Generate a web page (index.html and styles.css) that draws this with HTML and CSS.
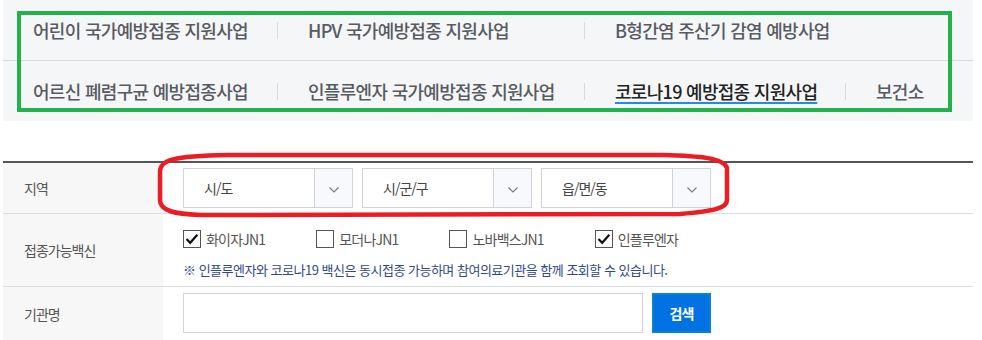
FILE: index.html
```html
<!DOCTYPE html>
<html lang="ko">
<head>
    <meta charset="UTF-8">
    <meta name="viewport" content="width=device-width, initial-scale=1.0">
    <title>예방접종 의료기관 찾기</title>
    <link rel="stylesheet" href="styles.css">
</head>
<body>
    <div class="page">
        <div class="program-nav">
            <ul class="nav-row">
                <li><a href="#">어린이 국가예방접종 지원사업</a></li>
                <li><a href="#">HPV 국가예방접종 지원사업</a></li>
                <li><a href="#">B형간염 주산기 감염 예방사업</a></li>
            </ul>
            <ul class="nav-row">
                <li><a href="#">어르신 폐렴구균 예방접종사업</a></li>
                <li><a href="#">인플루엔자 국가예방접종 지원사업</a></li>
                <li class="active"><a href="#">코로나19 예방접종 지원사업</a></li>
                <li><a href="#">보건소</a></li>
            </ul>
        </div>

        <div class="search-table">
            <div class="search-row">
                <div class="search-label">지역</div>
                <div class="search-field region">
                    <div class="select">
                        <span class="select-text">시/도</span>
                        <span class="select-arrow"><svg width="10" height="6" viewBox="0 0 10 6"><polyline points="0.5,0.5 5,5 9.5,0.5" fill="none" stroke="#7a7a7a" stroke-width="1.1"/></svg></span>
                    </div>
                    <div class="select">
                        <span class="select-text">시/군/구</span>
                        <span class="select-arrow"><svg width="10" height="6" viewBox="0 0 10 6"><polyline points="0.5,0.5 5,5 9.5,0.5" fill="none" stroke="#7a7a7a" stroke-width="1.1"/></svg></span>
                    </div>
                    <div class="select">
                        <span class="select-text">읍/면/동</span>
                        <span class="select-arrow"><svg width="10" height="6" viewBox="0 0 10 6"><polyline points="0.5,0.5 5,5 9.5,0.5" fill="none" stroke="#7a7a7a" stroke-width="1.1"/></svg></span>
                    </div>
                </div>
            </div>

            <div class="search-row">
                <div class="search-label">접종가능백신</div>
                <div class="search-field vaccine">
                    <div class="check-list">
                        <label class="check">
                            <span class="check-box"><svg width="18" height="18" viewBox="0 0 18 18"><polyline points="3.5,9 7.2,12.8 14.3,4.8" fill="none" stroke="#111" stroke-width="2.2"/></svg></span>
                            화이자JN1
                        </label>
                        <label class="check">
                            <span class="check-box"></span>
                            모더나JN1
                        </label>
                        <label class="check">
                            <span class="check-box"></span>
                            노바백스JN1
                        </label>
                        <label class="check">
                            <span class="check-box"><svg width="18" height="18" viewBox="0 0 18 18"><polyline points="3.5,9 7.2,12.8 14.3,4.8" fill="none" stroke="#111" stroke-width="2.2"/></svg></span>
                            인플루엔자
                        </label>
                    </div>
                    <p class="notice">※ 인플루엔자와 코로나19 백신은 동시접종 가능하며 참여의료기관을 함께 조회할 수 있습니다.</p>
                </div>
            </div>

            <div class="search-row">
                <div class="search-label">기관명</div>
                <div class="search-field org">
                    <input type="text" class="text-input">
                    <button type="button" class="btn-search">검색</button>
                </div>
            </div>
        </div>
    </div>

    <!-- annotation marks -->
    <div class="mark-green"></div>
    <svg class="mark-red" viewBox="0 0 982 340" width="982" height="340">
        <path d="M 160 200 L 160 172 C 160 160, 172 156, 228 155 L 663 155 C 700 156, 724 158, 727 168 L 727 200 C 727 208, 715 211, 680 214 L 200 215 C 175 214, 160 211, 160 200 Z" fill="none" stroke="#ed1c24" stroke-width="4.5" stroke-linejoin="round"/>
    </svg>
</body>
</html>
```

FILE: styles.css
```css
body {
    font-family: "Noto Sans CJK KR", "Noto Sans", sans-serif;
    background-color: #fff;
    color: #555;
    margin: 0;
    padding: 0;
    letter-spacing: -1px;
}
ul {
    list-style: none;
    margin: 0;
    padding: 0;
}
a {
    color: inherit;
    text-decoration: none;
}
.page {
    width: 970px;
    margin-left: 3px;
}
.program-nav {
    background-color: #f5f6f8;
}
.nav-row {
    display: grid;
    grid-template-columns: 274px 307px 261px 1fr;
    height: 60px;
}
.nav-row + .nav-row {
    border-top: 1px solid #dcdcdc;
}
.nav-row li {
    display: flex;
    align-items: center;
    font-size: 18px;
    font-weight: 500;
    letter-spacing: -0.7px;
    color: #575b61;
}
.nav-row li::before {
    content: '';
    width: 1px;
    height: 17px;
    background-color: #d9dadd;
    margin-right: 30px;
}
.nav-row li:first-child::before {
    width: 0;
}
.nav-row li.active {
    color: #222;
}
.nav-row li.active a {
    text-decoration: underline;
    text-decoration-color: #1c8fe2;
    text-decoration-thickness: 2px;
    text-underline-offset: 3px;
}
.search-table {
    margin-top: 40px;
    border-top: 2px solid #555;
}
.search-row {
    display: flex;
    border-bottom: 1px solid #dddddd;
}
.search-label {
    width: 160px;
    flex-shrink: 0;
    box-sizing: border-box;
    padding-left: 21px;
    background-color: #f7f7f7;
    display: flex;
    align-items: center;
    font-size: 14px;
}
.search-field {
    padding: 5px 20px;
}
.region {
    display: flex;
    gap: 9px;
}
.select {
    width: 170px;
    height: 40px;
    box-sizing: border-box;
    border: 1px solid #d0d3da;
    display: flex;
    align-items: center;
    background-color: #fff;
}
.select-text {
    flex: 1;
    padding-left: 20px;
    font-size: 14px;
    color: #444;
}
.select-arrow {
    width: 38px;
    height: 100%;
    border-left: 1px solid #d0d3da;
    background-color: #f8f9fc;
    display: flex;
    align-items: center;
    justify-content: center;
    padding-top: 3px;
    box-sizing: border-box;
}
.vaccine {
    padding: 12px 20px 6px;
}
.check-list {
    display: flex;
    gap: 51px;
    height: 26px;
    align-items: center;
}
.check {
    display: flex;
    align-items: center;
    font-size: 14px;
    letter-spacing: -0.8px;
    color: #555;
}
.check-box {
    width: 18px;
    height: 18px;
    box-sizing: border-box;
    border: 1px solid #555;
    background-color: #fff;
    margin-right: 5px;
    display: flex;
}
.check-box svg {
    margin: -1px;
}
.notice {
    margin: 8px 0 0;
    line-height: 20px;
    font-size: 13px;
    letter-spacing: -0.5px;
    color: #2f4a8a;
}
.org {
    display: flex;
    gap: 9px;
    padding: 6px 20px 7px;
}
.text-input {
    width: 460px;
    height: 40px;
    box-sizing: border-box;
    border: 1px solid #d0d3da;
    margin: 0;
    padding: 0 12px;
    font-family: inherit;
}
.btn-search {
    width: 59px;
    height: 40px;
    box-sizing: border-box;
    border: 2px solid #0b82cb;
    background-color: #0072e3;
    color: #fff;
    font-family: inherit;
    font-size: 14px;
    font-weight: 700;
    letter-spacing: -1px;
    cursor: pointer;
}
.mark-green {
    position: absolute;
    left: 17px;
    top: 11px;
    width: 935px;
    height: 101px;
    box-sizing: border-box;
    border: 4px solid #22b14c;
    pointer-events: none;
}
.mark-red {
    position: absolute;
    left: 0;
    top: 0;
    pointer-events: none;
}
```
